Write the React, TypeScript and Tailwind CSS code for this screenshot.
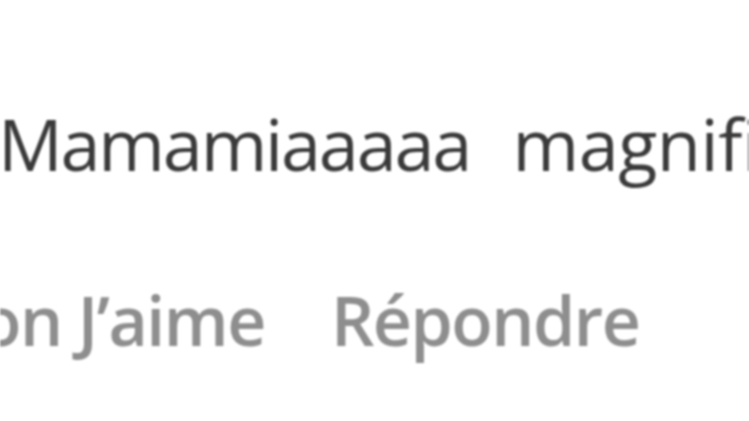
export default function App() {
  return (
    <div
      className="w-[749px] h-[421px] overflow-hidden bg-white blur-[0.8px]"
      style={{ fontFamily: '"Open Sans", "Noto Sans", sans-serif' }}
    >
      <div className="pt-[93px] -ml-[2px] text-[72px] leading-[100px] text-[#3a3a3a] whitespace-nowrap tracking-[-2.2px] [word-spacing:26px]">
        Mamamiaaaaa <span className="tracking-[-0.5px]">magnifique</span>
      </div>
      <div className="mt-[82px] -ml-[20px] flex gap-[66px] text-[68px] leading-[90px] font-semibold text-[#8e8e8e] whitespace-nowrap tracking-[-1.5px]">
        <span>on J’aime</span>
        <span>Répondre</span>
      </div>
    </div>
  );
}
